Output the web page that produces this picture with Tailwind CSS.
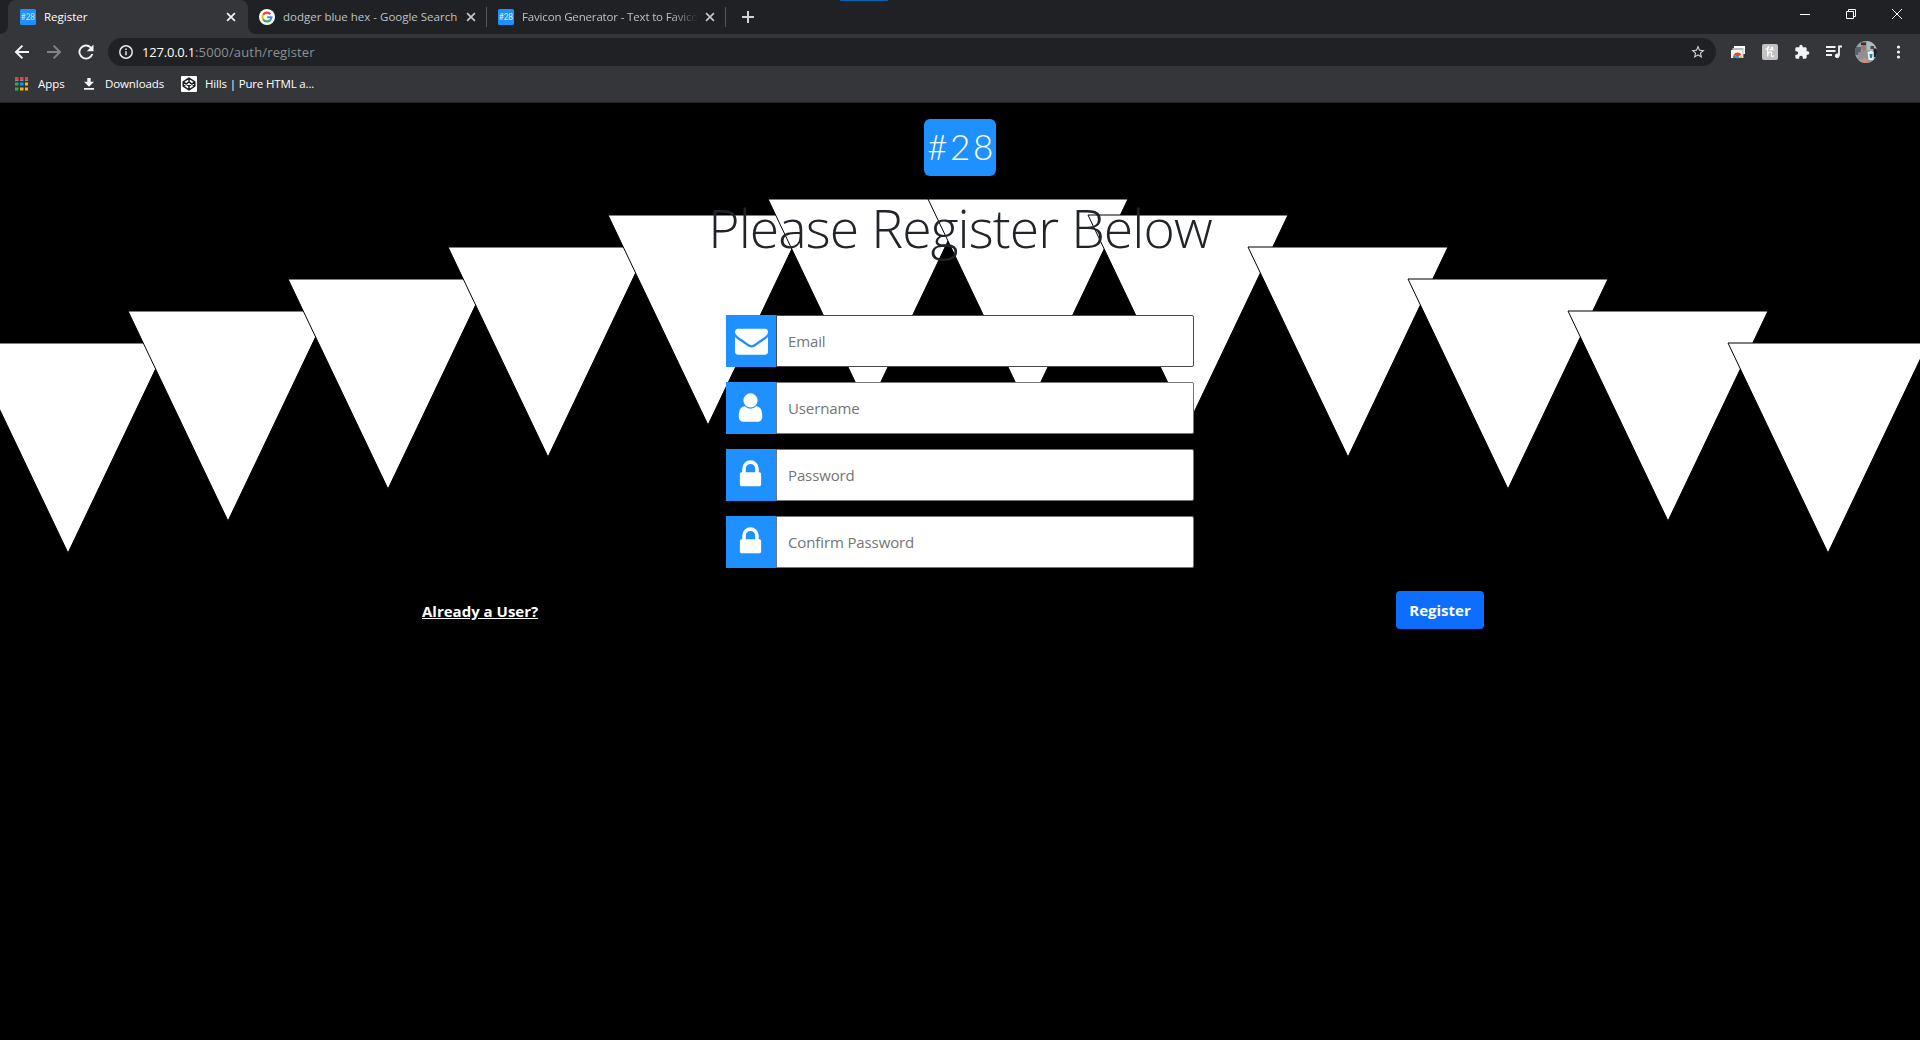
<!DOCTYPE html>
<html lang="en">
<head>
<meta charset="utf-8">
<title>Register</title>
<script src="https://cdn.jsdelivr.net/npm/@tailwindcss/browser@4"></script>
</head>
<body class="flex h-screen flex-col overflow-hidden bg-black font-['Open_Sans',sans-serif]">

<!-- Tab strip -->
<header class="relative flex h-[34px] shrink-0 bg-[#202124] text-[11.5px] text-[#bdc1c6]">
  <div class="absolute left-[840px] top-0 h-px w-12 bg-[#0063b1]"></div>
  <svg class="w-2 shrink-0" viewBox="0 0 8 34"><path d="M8 26v8H0a8 8 0 0 0 8-8z" fill="#35363a"/></svg>
  <div class="flex w-[240px] items-center rounded-t-lg bg-[#35363a] pl-3 text-white">
    <svg class="size-4" viewBox="0 0 16 16"><rect width="16" height="16" rx="1.5" fill="#1e90ff"/><text x="1" y="11.3" font-family="Lato" font-size="9" textLength="14" lengthAdjust="spacingAndGlyphs" fill="#cfe6ff">#28</text></svg>
    <span class="ml-2 w-[176px]">Register</span>
    <svg class="ml-1 size-4 -translate-x-px" viewBox="0 0 16 16" stroke="#f1f3f4" stroke-width="1.7"><path d="M4.1 4.1l7.8 7.8M11.9 4.1L4.1 11.9"/></svg>
  </div>
  <svg class="w-2 shrink-0" viewBox="0 0 8 34"><path d="M0 26v8h8a8 8 0 0 1-8-8z" fill="#35363a"/></svg>
  <div class="flex w-[230px] items-center pl-[3px]">
    <svg class="size-4" viewBox="0 0 16 16" fill="none" stroke-width="2.1"><circle cx="8" cy="8" r="8" fill="#fff"/><path d="M11.4 5.2A4.5 4.5 0 0 0 4.1 5.8" stroke="#ea4335"/><path d="M4.1 5.8a4.5 4.5 0 0 0 0 4.4" stroke="#fbbc05"/><path d="M4.1 10.2a4.5 4.5 0 0 0 6.8 1.2" stroke="#34a853"/><path d="M10.9 11.4A4.5 4.5 0 0 0 12.4 8.2H8.2" stroke="#4285f4"/></svg>
    <span class="ml-2 w-[180px] whitespace-nowrap">dodger blue hex - Google Search</span>
    <svg class="size-4" viewBox="0 0 16 16" stroke="#c4c7ca" stroke-width="1.7"><path d="M4.1 4.1l7.8 7.8M11.9 4.1L4.1 11.9"/></svg>
  </div>
  <div class="flex w-[239px] items-center">
    <div class="mr-[11px] h-5 w-px bg-[#55575b]"></div>
    <svg class="size-4" viewBox="0 0 16 16"><rect width="16" height="16" rx="1.5" fill="#1e90ff"/><text x="1" y="11.3" font-family="Lato" font-size="9" textLength="14" lengthAdjust="spacingAndGlyphs" fill="#e6f2ff">#28</text></svg>
    <span class="ml-2 w-[176px] overflow-hidden whitespace-nowrap tracking-[-0.16px] mask-r-from-85% mask-r-to-100%">Favicon Generator - Text to Favico</span>
    <svg class="ml-1 size-4 shrink-0" viewBox="0 0 16 16" stroke="#c4c7ca" stroke-width="1.7"><path d="M4.1 4.1l7.8 7.8M11.9 4.1L4.1 11.9"/></svg>
  </div>
  <div class="flex items-center">
    <div class="h-5 w-px bg-[#55575b]"></div>
    <svg class="ml-[15px] size-3.5" viewBox="0 0 14 14" stroke="#d0d3d6" stroke-width="2"><path d="M7 1v12M1 7h12"/></svg>
  </div>
  <div class="mb-[6px] ml-auto mr-[18px] flex items-center gap-9">
    <svg class="size-2.5" viewBox="0 0 10 10" stroke="#fff"><path d="M0 5.5h10"/></svg>
    <svg class="size-2.5" viewBox="0 0 10 10" fill="none" stroke="#fff"><path d="M.5 2.5h7v7h-7zM2.5 2.5v-2h7v7h-2"/></svg>
    <svg class="size-2.5" viewBox="0 0 10 10" stroke="#fff"><path d="M0 0l10 10M10 0L0 10"/></svg>
  </div>
</header>

<!-- Navigation bar -->
<nav class="flex h-9 shrink-0 items-center bg-[#35363a] pl-3">
  <svg class="size-5" viewBox="0 0 20 20" fill="none" stroke="#f1f3f4" stroke-width="2"><path d="M17 10H4.5M10.4 3.6L4 10l6.4 6.4"/></svg>
  <svg class="ml-3 size-5" viewBox="0 0 20 20" fill="none" stroke="#818386" stroke-width="2"><path d="M3 10h12.5M9.6 3.600L16 10l-6.4 6.4"/></svg>
  <svg class="ml-3 size-5" viewBox="0 0 24 24" fill="#f1f3f4"><path d="M18.4 5.6A9 9 0 1 0 20.7 14.300h-2.4a6.700 6.700 0 1 1-1.6-7L13 11h8V3z"/></svg>
  <div class="ml-3 flex h-7 w-[1608px] items-center rounded-full bg-[#202124] pl-[11px] pr-[10px]">
    <svg class="size-3.5" viewBox="0 0 14 14" fill="none" stroke="#e8eaed" stroke-width="1.5"><circle cx="7" cy="7" r="6.2"/><path d="M7 6.200v4M7 3.500v1.500"/></svg>
    <span class="ml-[9px] pt-px text-[13px] tracking-[0.15px] text-[#8d9094]"><span class="tracking-[-0.2px] text-white">127.0.0.1</span>:5000/auth/register</span>
    <svg class="ml-auto size-4" viewBox="0 0 24 24" fill="#d5d7da"><path d="M22 9.240l-7.190-.620L12 2 9.190 8.630 2 9.240l5.460 4.730L5.820 21 12 17.270 18.180 21l-1.630-7.030L22 9.240zM12 15.400l-3.760 2.270 1-4.280-3.320-2.880 4.380-.380L12 6.100l1.710 4.040 4.380.380-3.320 2.880 1 4.280L12 15.400z"/></svg>
  </div>
  <svg class="ml-[14px] size-4" viewBox="0 0 16 16"><path d="M4 2h11v8h-2V4.500H4z" fill="#fff"/><path d="M2.500 4h11v10h-11z" fill="#b9bbbd"/><path d="M1 6h11.500v8H1z" fill="#f5f5f5"/><path d="M2.800 14a4.600 4.600 0 0 1 1.300-3.400L7.500 14z" fill="#34a853"/><path d="M3.600 11a4.300 4.300 0 0 1 7.800 0l-3.900 1.500z" fill="#ea4335"/><path d="M11.400 11a5 5 0 0 1 .3 3H8z" fill="#fbbc05"/><circle cx="7.500" cy="13" r="1.600" fill="#4285f4"/></svg>
  <svg class="ml-4 size-4" viewBox="0 0 16 16"><rect width="16" height="16" rx="2" fill="#c2c2c2"/><path d="M3.500 5.400C5.500 4.800 7 3.800 6.800 2.900 6.500 2.200 5.700 3 5.700 4.500V12.500C5.900 10 7 7.800 8.500 7.800c1.700 0 .7 2.600.9 3.900.2 1.100 1.700 1 2.500-.2M7.500 5.600h4.200M9.200 5.600c-.3-1.500.4-2.600 1.100-2.300.8.400.2 1.700-.5 2.300" fill="none" stroke="#fff" stroke-width="1.200"/></svg>
  <svg class="ml-4 size-4" viewBox="0 0 24 24" fill="#f1f3f4"><path d="M20.500 11H19V7c0-1.100-.9-2-2-2h-4V3.500a2.500 2.500 0 0 0-5 0V5H4c-1.100 0-1.990.9-1.990 2v3.800H3.500c1.490 0 2.700 1.210 2.700 2.700s-1.210 2.700-2.700 2.700H2V20c0 1.100.9 2 2 2h3.800v-1.500c0-1.490 1.210-2.700 2.700-2.700s2.700 1.210 2.700 2.700V22H17c1.100 0 2-.9 2-2v-4h1.500a2.500 2.500 0 0 0 0-5z"/></svg>
  <svg class="ml-[15px] size-[18px]" viewBox="0 0 18 18" fill="none" stroke="#f1f3f4" stroke-width="1.800"><path d="M1 4h9.500M1 8h9.500M1 12h6M17 3.500h-3v9"/><circle cx="12.200" cy="12.800" r="1.900" fill="#f1f3f4" stroke-width="1"/></svg>
  <svg class="ml-3 size-[22px]" viewBox="0 0 22 22"><defs><clipPath id="av"><circle cx="11" cy="11" r="11"/></clipPath></defs><g clip-path="url(#av)"><path fill="#93a5b0" d="M0 0h22v22H0z"/><path d="M12 0h10v9H12z" fill="#a9bdc8"/><path d="M0 6h6v8H0z" fill="#57636b"/><path d="M3 22V12l4-2.500h5l3 3V22z" fill="#8d9196"/><path d="M6.500 2.500h4.300v6.300l-2 1.500-2.300-2z" fill="#a9745b"/><path d="M6 4V1.500h5V4z" fill="#3d2e28"/><path d="M15.500 5h3.500v3h-3.500z" fill="#5a4034"/><path d="M18.500 7.500H22V16h-3z" fill="#1c2126"/><path d="M12.500 11l4-1.500 2 1.500v8h-5z" fill="#e9f1f5"/><path d="M14.500 13h3l-.5 4h-2z" fill="#2b7f9e"/><path d="M4 19l7-2 3 2-2 3H5z" fill="#c98f77"/></g></svg>
  <svg class="ml-[13px] size-4" viewBox="0 0 16 16" fill="#f1f3f4"><circle cx="8.500" cy="3" r="1.600"/><circle cx="8.500" cy="8" r="1.600"/><circle cx="8.500" cy="13" r="1.600"/></svg>
</nav>

<!-- Bookmarks bar -->
<div class="flex h-[33px] shrink-0 items-center border-b border-[#232427] bg-[#35363a] pb-1 pl-[15px] text-[11.5px] text-white">
  <svg class="h-[14px] w-[13px]" viewBox="0 0 13 14"><path d="M0 0h3.500v3H0zM5 0h3.500v3H5zM10 0h3v3h-3z" fill="#ea4335"/><path d="M0 3h3.500v1H0zM5 3h3.500v1H5zM10 3h3v1h-3z" fill="#8d8f92"/><path d="M0 5.500h3.500v3H0zM0 10.500h3.500v3H0z" fill="#34a853"/><path d="M5 5.500h3.500v3H5z" fill="#1a90ff"/><path d="M10 5.500h3v3h-3zM5 10.500h3.500v3H5zM10 10.500h3v3h-3z" fill="#fbb505"/></svg>
  <span class="ml-2.5 w-[45px]">Apps</span>
  <svg class="h-3 w-3" viewBox="0 0 12 12" fill="#f1f3f4"><path d="M4.300 0h3.400v3.800H11L6 8.700 1 3.800h3.300zM1 10h10v1.800H1z"/></svg>
  <span class="ml-[10px] w-[76px] tracking-[-0.1px]">Downloads</span>
  <svg class="size-4" viewBox="0 0 16 16" fill="none" stroke="#1e1f21" stroke-width="1.500"><rect width="16" height="16" rx="1" fill="#fff" stroke="none"/><path d="M8 2.200l5.800 3.700v4.200L8 13.800l-5.800-3.700V5.900zM8 2.200v3.600M8 10.200v3.600M2.200 5.900L8 10l5.800-4.100M2.200 10.100L8 6l5.800 4.100"/></svg>
  <span class="ml-2 whitespace-nowrap tracking-[-0.16px]">Hills | Pure HTML a...</span>
</div>

<!-- Page -->
<main class="relative flex-1 overflow-hidden bg-black">
  <svg class="absolute left-0 top-0 h-[500px] w-full" viewBox="0 103 1920 500" fill="#fff" stroke="#000">
    <path d="M-32 343h200l-100 210z"/><path d="M128 311h200l-100 210z"/><path d="M288 279h200l-100 210z"/><path d="M448 247h200l-100 210z"/><path d="M608 215h200l-100 210z"/><path d="M768 199h200l-100 210z"/><path d="M928 199h200l-100 210z"/><path d="M1088 215h200l-100 210z"/><path d="M1248 247h200l-100 210z"/><path d="M1408 279h200l-100 210z"/><path d="M1568 311h200l-100 210z"/><path d="M1728 343h200l-100 210z"/>
  </svg>
  <div class="relative flex flex-col items-center pt-4">
    <div class="flex h-[57px] w-[72px] items-center justify-center rounded-md bg-[#1e90ff] pb-[3px] pl-[3px] font-['Lato',sans-serif] text-[35px] font-light tracking-[2.5px] text-white">#28</div>
    <h1 class="mt-[18px] h-[68px] whitespace-nowrap text-[53.5px] font-light leading-[67px] tracking-[-0.9px] text-[#212529]">Please Register Below</h1>
    <form class="mt-[53px] flex w-[468px] flex-col gap-[15px] text-[15px] tracking-[-0.12px]">
      <div class="flex h-[52px]">
        <div class="flex w-[50px] justify-center bg-[#1e90ff] pl-px pt-[9px]"><svg class="size-[33px]" viewBox="0 0 1792 1792" fill="#fff"><path d="M1792 710v794q0 66-47 113t-113 47h-1472q-66 0-113-47t-47-113v-794q44 49 101 87 362 246 497 345 57 42 92.500 65.500t94.500 48 110 24.500h2q51 0 110-24.500t94.500-48 92.500-65.500q170-123 498-345 57-39 100-87zm0-294q0 79-49 151t-122 123q-376 261-468 325-10 7-42.500 31t-54 38.500-52 32.500-57.500 27-50 9h-2q-23 0-50-9t-57.500-27-52-32.500-54-38.500-42.500-31q-91-64-262-182.500t-205-142.500q-62-42-117-115.500t-55-136.500q0-78 41.500-130t118.500-52h1472q65 0 112.500 47t47.500 113z"/></svg></div>
        <input class="flex-1 rounded-r-xs border border-[#4a4a4a] bg-white px-[11px] placeholder:text-[#757575]" placeholder="Email">
      </div>
      <div class="flex h-[52px]">
        <div class="flex w-[50px] justify-center bg-[#1e90ff] pr-px pt-[9px]"><svg class="size-[33px]" viewBox="0 0 1792 1792" fill="#fff"><path d="M1536 1399q0 109-62.500 187t-150.500 78h-854q-88 0-150.500-78t-62.500-187q0-85 8.500-160.500t31.500-152 58.500-131 94-89 134.500-34.500q131 128 313 128t313-128q76 0 134.500 34.500t94 89 58.500 131 31.500 152 8.500 160.500zm-256-887q0 159-112.500 271.500t-271.500 112.500-271.500-112.500-112.500-271.500 112.500-271.500 271.500-112.500 271.500 112.500 112.500 271.500z"/></svg></div>
        <input class="flex-1 rounded-r-xs border border-[#767676] bg-white px-[11px] placeholder:text-[#757575]" placeholder="Username">
      </div>
      <div class="flex h-[52px]">
        <div class="flex w-[50px] justify-center bg-[#1e90ff] pr-px pt-[9px]"><svg class="size-[33px]" viewBox="0 0 1792 1792" fill="#fff"><path d="M640 768h512v-192q0-106-75-181t-181-75-181 75-75 181v192zm832 96v576q0 40-28 68t-68 28h-960q-40 0-68-28t-28-68v-576q0-40 28-68t68-28h32v-192q0-184 132-316t316-132 316 132 132 316v192h32q40 0 68 28t28 68z"/></svg></div>
        <input class="flex-1 rounded-r-xs border border-[#767676] bg-white px-[11px] placeholder:text-[#757575]" placeholder="Password">
      </div>
      <div class="flex h-[52px]">
        <div class="flex w-[50px] justify-center bg-[#1e90ff] pr-px pt-[9px]"><svg class="size-[33px]" viewBox="0 0 1792 1792" fill="#fff"><path d="M640 768h512v-192q0-106-75-181t-181-75-181 75-75 181v192zm832 96v576q0 40-28 68t-68 28h-960q-40 0-68-28t-28-68v-576q0-40 28-68t68-28h32v-192q0-184 132-316t316-132 316 132 132 316v192h32q40 0 68 28t28 68z"/></svg></div>
        <input class="flex-1 rounded-r-xs border border-[#767676] bg-white px-[11px] placeholder:text-[#757575]" placeholder="Confirm Password">
      </div>
    </form>
    <div class="mt-[23px] flex w-[1062px] -translate-x-[7px] items-center justify-between text-[15px] font-bold text-white">
      <a href="#" class="pt-0.5 underline">Already a User?</a>
      <button type="button" class="h-[38px] w-[88px] rounded bg-[#0d6efd]">Register</button>
    </div>
  </div>
</main>
</body>
</html>
